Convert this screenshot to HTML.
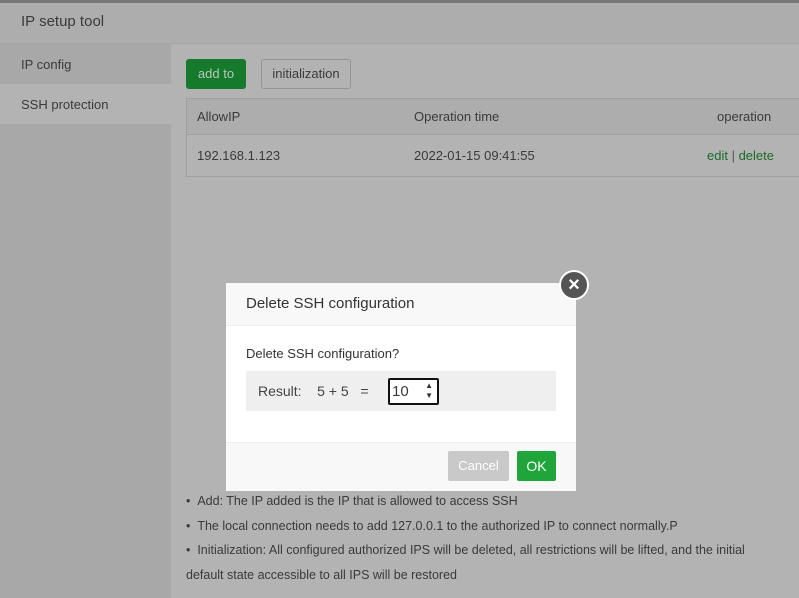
<!DOCTYPE html><html><head><style>
body{margin:0;width:799px;height:598px;overflow:hidden;background:#b3b3b3;font-family:"Liberation Sans",sans-serif;position:relative;font-size:13px;color:#3a3a3a}
.a{position:absolute}
</style></head><body>
<div class="a" style="left:0;top:0;width:799px;height:3px;background:#777"></div>
<div class="a" style="left:0;top:3px;width:799px;height:40px;background:#adadad;border-bottom:1px solid #a5a5a5"></div>
<div class="a" style="left:21px;top:13px;font-size:15px;color:#3a3a3a">IP setup tool</div>
<div class="a" style="left:0;top:44px;width:171px;height:554px;background:#a8a8a8"></div>
<div class="a" style="left:0;top:84px;width:171px;height:40px;background:#b3b3b3"></div>
<div class="a" style="left:21px;top:57px">IP config</div>
<div class="a" style="left:21px;top:97px">SSH protection</div>
<div class="a" style="left:186px;top:59px;width:60px;height:30px;background:#157a2c;border-radius:3px;color:#b8c8bb;line-height:30px;text-align:center">add to</div>
<div class="a" style="left:261px;top:59px;width:88px;height:28px;border:1px solid #959595;border-radius:3px;line-height:28px;text-align:center">initialization</div>
<div class="a" style="left:186px;top:98px;width:618px;height:77px;border:1px solid #a0a0a0;"></div>
<div class="a" style="left:187px;top:99px;width:612px;height:35px;background:#adadad;border-bottom:1px solid #a0a0a0"></div>
<div class="a" style="left:197px;top:109px">AllowIP</div>
<div class="a" style="left:414px;top:109px">Operation time</div>
<div class="a" style="left:717px;top:109px">operation</div>
<div class="a" style="left:197px;top:148px">192.168.1.123</div>
<div class="a" style="left:414px;top:148px">2022-01-15 09:41:55</div>
<div class="a" style="left:707px;top:148px;color:#1c6a2a">edit <span style="color:#555">|</span> delete</div>
<div class="a" style="left:186px;top:489px;line-height:24.5px;font-size:12.5px;width:605px">• &nbsp;Add: The IP added is the IP that is allowed to access SSH<br>• &nbsp;The local connection needs to add 127.0.0.1 to the authorized IP to connect normally.P<br>• &nbsp;Initialization: All configured authorized IPS will be deleted, all restrictions will be lifted, and the initial<br>default state accessible to all IPS will be restored</div>
<div class="a" style="left:226px;top:283px;width:350px;height:207px;background:#fff">
<div class="a" style="left:0;top:0;width:350px;height:42px;background:#f8f8f8;border-bottom:1px solid #eee"></div>
<div class="a" style="left:20px;top:12px;font-size:15px;color:#333">Delete SSH configuration</div>
<div class="a" style="left:20px;top:63px;color:#333">Delete SSH configuration?</div>
<div class="a" style="left:20px;top:88px;width:310px;height:40px;background:#efefef"></div>
<div class="a" style="left:32px;top:100px;font-size:14px;color:#444">Result: &nbsp;&nbsp;&nbsp;5 + 5 &nbsp;&nbsp;=</div>
<div class="a" style="left:162px;top:95px;width:45px;height:23px;border:2px solid #111;border-radius:2px;background:#fff;font-size:15px;line-height:23px;padding-left:2px;box-sizing:content-box">10<span style="position:absolute;right:4px;top:1px;font-size:8px;line-height:10px;color:#333">▲<br>▼</span></div>
<div class="a" style="left:0;top:159px;width:350px;height:48px;background:#f8f8f8;border-top:1px solid #eee"></div>
<div class="a" style="left:222px;top:168px;width:61px;height:30px;background:#c9c9c9;border-radius:2px;color:#fff;line-height:30px;text-align:center">Cancel</div>
<div class="a" style="left:291px;top:168px;width:39px;height:30px;background:#20a53a;border-radius:2px;color:#fff;line-height:30px;text-align:center;font-size:14px">OK</div>
</div>
<div class="a" style="left:559px;top:270px;width:26px;height:26px;border-radius:50%;background:#555;border:2px solid #fff;color:#fff;text-align:center;line-height:26px;font-size:20px;font-weight:bold">×</div>
</body></html>
